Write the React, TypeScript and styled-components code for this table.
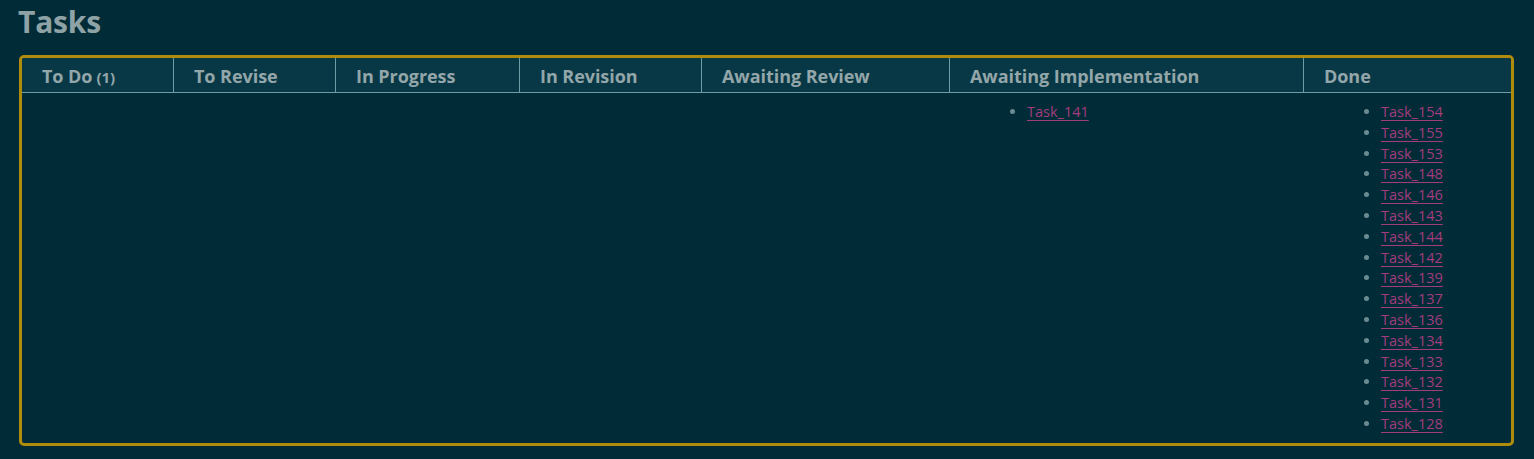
import React from "react";
import styled, { createGlobalStyle } from "styled-components";

const GlobalStyle = createGlobalStyle`
  html, body {
    margin: 0;
    padding: 0;
    background: #022b38;
  }
  body {
    font-family: "Open Sans", "Noto Sans", sans-serif;
  }
`;

const COLS = "151px 162px 184px 182px 248px 354px 1fr";

const Page = styled.div`
  padding: 2px 20px 14px 19px;
  background: #022b38;
  min-height: 459px;
  box-sizing: border-box;
`;

const Title = styled.h1`
  margin: 0 0 13px -1px;
  font-size: 30px;
  line-height: 40px;
  font-weight: 700;
  color: #8fa3a6;
  letter-spacing: -0.2px;
`;

const Board = styled.div`
  border: 3px solid #b08c0c;
  border-radius: 5px;
  overflow: hidden;
`;

const Row = styled.div`
  display: grid;
  grid-template-columns: ${COLS};
`;

const HeaderRow = styled(Row)`
  background: #083845;
  border-bottom: 1px solid #6f9ca5;
`;

const HeaderCell = styled.div<{ $first?: boolean }>`
  height: 34px;
  box-sizing: border-box;
  display: flex;
  align-items: center;
  padding: 2px 0 0 ${(p) => (p.$first ? "20px" : "20px")};
  border-left: ${(p) => (p.$first ? "none" : "1px solid #6f9ca5")};
  font-size: 18px;
  font-weight: 700;
  letter-spacing: -0.05px;
  color: #93a6a9;
  white-space: nowrap;
`;

const Count = styled.span`
  font-size: 15px;
  font-weight: 700;
  margin-left: 4px;
  padding-top: 2px;
`;

const BodyCell = styled.div`
  padding: 9px 0 8px 20px;
`;

const TaskList = styled.ul`
  margin: 0;
  padding-left: 58px;
`;

const TaskItem = styled.li`
  font-size: 14.5px;
  line-height: 20.8px;
  color: #6b8b92;
  &::marker {
    color: #6b8b92;
  }
`;

const TaskLink = styled.a`
  color: #a33c7d;
  text-decoration: underline;
  text-underline-offset: 3px;
  text-decoration-thickness: 1px;
  cursor: pointer;
`;

type Column = { name: string; count?: number; tasks: string[] };

const columns: Column[] = [
  { name: "To Do", count: 1, tasks: [] },
  { name: "To Revise", tasks: [] },
  { name: "In Progress", tasks: [] },
  { name: "In Revision", tasks: [] },
  { name: "Awaiting Review", tasks: [] },
  { name: "Awaiting Implementation", tasks: ["Task_141"] },
  {
    name: "Done",
    tasks: [
      "Task_154",
      "Task_155",
      "Task_153",
      "Task_148",
      "Task_146",
      "Task_143",
      "Task_144",
      "Task_142",
      "Task_139",
      "Task_137",
      "Task_136",
      "Task_134",
      "Task_133",
      "Task_132",
      "Task_131",
      "Task_128",
    ],
  },
];

export default function App() {
  return (
    <>
      <GlobalStyle />
      <Page>
        <Title>Tasks</Title>
        <Board>
          <HeaderRow>
            {columns.map((c, i) => (
              <HeaderCell key={c.name} $first={i === 0}>
                {c.name}
                {c.count !== undefined && <Count>({c.count})</Count>}
              </HeaderCell>
            ))}
          </HeaderRow>
          <Row>
            {columns.map((c) => (
              <BodyCell key={c.name}>
                {c.tasks.length > 0 && (
                  <TaskList>
                    {c.tasks.map((t) => (
                      <TaskItem key={t}>
                        <TaskLink>{t}</TaskLink>
                      </TaskItem>
                    ))}
                  </TaskList>
                )}
              </BodyCell>
            ))}
          </Row>
        </Board>
      </Page>
    </>
  );
}
